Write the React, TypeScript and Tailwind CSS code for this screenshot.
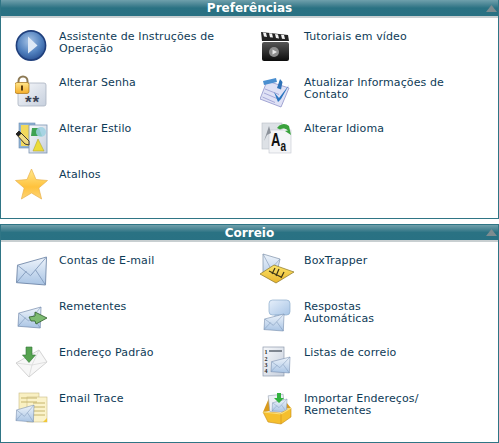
import React from "react";

const Defs = () => (
  <svg width="0" height="0" className="absolute">
    <defs>
      <linearGradient id="env" x1="0" y1="0" x2="0" y2="1"><stop offset="0" stopColor="#eef4fb" /><stop offset="1" stopColor="#a9c4e4" /></linearGradient>
      <linearGradient id="bubble" x1="0" y1="0" x2="1" y2="1"><stop offset="0" stopColor="#e6effa" /><stop offset="1" stopColor="#a8c5e6" /></linearGradient>
      <radialGradient id="play" cx="0.45" cy="0.35" r="0.7"><stop offset="0" stopColor="#a6c3e6" /><stop offset="0.6" stopColor="#4f7fbd" /><stop offset="1" stopColor="#274d8f" /></radialGradient>
      <linearGradient id="gold" x1="0" y1="0" x2="0" y2="1"><stop offset="0" stopColor="#ffe58a" /><stop offset="1" stopColor="#f5ae2a" /></linearGradient>
      <linearGradient id="star" x1="0" y1="0" x2="0" y2="1"><stop offset="0" stopColor="#ffe98f" /><stop offset="0.6" stopColor="#ffc23c" /><stop offset="1" stopColor="#fdd57a" /></linearGradient>
      <linearGradient id="paper" x1="0" y1="0" x2="1" y2="1"><stop offset="0" stopColor="#f8f9fb" /><stop offset="1" stopColor="#c6cfdd" /></linearGradient>
      <linearGradient id="film" x1="0" y1="0" x2="0" y2="1"><stop offset="0" stopColor="#565656" /><stop offset="1" stopColor="#0c0c0c" /></linearGradient>
      <linearGradient id="yel" x1="0" y1="0" x2="0" y2="1"><stop offset="0" stopColor="#fbe46a" /><stop offset="1" stopColor="#e9b52c" /></linearGradient>
    </defs>
  </svg>
);

const Envelope = ({ x = 0, y = 0, w = 30, h = 24 }: { x?: number; y?: number; w?: number; h?: number }) => (
  <g transform={`translate(${x} ${y}) scale(${w / 30} ${h / 24})`}>
    <path d="M1 7 30 0 29 24 0 22Z" fill="url(#env)" stroke="#6d84a6" strokeWidth="0.8" />
    <path d="M1 7 14 16 30 0M0 22 10 12M29 24 19 11" fill="none" stroke="#7f98ba" strokeWidth="0.8" />
  </g>
);

const I = ({ children }: { children: React.ReactNode }) => (
  <svg viewBox="0 0 34 34" className="w-[34px] h-[34px] shrink-0">{children}</svg>
);

const icons: Record<string, React.ReactNode> = {
  play: (
    <I>
      <circle cx="16" cy="16.500" r="14.600" fill="url(#play)" stroke="#1f3f7c" strokeWidth="1.600" />
      <path d="M13 7.500 22.500 16.500 13 24.500Z" fill="#dfe9f6" />
    </I>
  ),
  lock: (
    <svg viewBox="0 0 36 42" className="w-[36px] h-[42px] shrink-0">
      <rect x="3" y="8" width="28" height="23" rx="2" fill="url(#paper)" stroke="#a9b3c0" strokeWidth="0.8" />
      <path d="M3.500 9V6a4.500 4.500 0 0 1 9 0v3" fill="none" stroke="#8d7a55" strokeWidth="2" />
      <rect x="0" y="7.500" width="14" height="11" rx="2" fill="url(#gold)" stroke="#a8721a" strokeWidth="0.7" />
      <rect x="6" y="10.500" width="2" height="5" fill="#5a3d10" />
      <text x="10" y="33" fontSize="17" letterSpacing="1" fontWeight="700" fill="#3b4252" fontFamily="Liberation Sans">**</text>
    </svg>
  ),
  style: (
    <I>
      <rect x="4" y="2" width="16" height="25" fill="#8fb3d6" stroke="#6c8db0" strokeWidth="0.6" />
      <rect x="6" y="4" width="12" height="21" fill="#f2d95c" />
      <rect x="14" y="4" width="18" height="28" fill="url(#paper)" stroke="#7d96b4" strokeWidth="0.8" />
      <path d="M16 15h11l-3-8h-7Z" fill="#3fa352" />
      <circle cx="26" cy="11" r="5" fill="#9ed1e2" opacity="0.85" />
      <path d="M18 30 23 18l6 12Z" fill="#ecdc3a" stroke="#a99f22" strokeWidth="0.5" />
      <path d="M1 13 4 10 14 20 14 24 10 23Z" fill="#f1dc83" stroke="#3d3a33" strokeWidth="1" />
      <path d="M1 13 4 10 6.500 12.500 3.500 15.500Z" fill="#222" />
    </I>
  ),
  star: (
    <I>
      <path d="M16.500 2 21 12.500 32.500 13.500 23.800 21 26.600 32 16.500 26 6.400 32 9.200 21 .5 13.500 12 12.500Z" fill="url(#star)" stroke="#e9b14c" strokeWidth="0.7" strokeLinejoin="round" />
    </I>
  ),
  video: (
    <I>
      <rect x="2" y="13" width="27" height="19" rx="2" fill="url(#film)" />
      <path d="M1 3 28 6 29 12 2 12Z" fill="#222" />
      <path d="M3 3.500 6 4 7 8 4 7.500ZM9 4.200 12 4.600 13 8.600 10 8.200ZM15 5 18 5.400 19 9.400 16 9ZM21 5.700 24 6 25 10 22 9.700Z" fill="#f2f2f2" />
      <circle cx="14" cy="23" r="5" fill="#8e8e8e" />
      <path d="M12.500 20.500 17 23 12.500 25.500Z" fill="#e8e8e8" />
    </I>
  ),
  contact: (
    <I>
      <path d="M7 6 29 13 21 32 0 24Z" fill="#dfe1f5" stroke="#8f93c9" strokeWidth="0.8" />
      <path d="M5 14 19 19.500M4 18 17 23.500M2.500 22 15 27.500" stroke="#a6a9d8" strokeWidth="1" />
      <path d="M3 6 16 3 17 7 4 10Z" fill="#4a8fd0" />
      <path d="M17 13 20 4 22.500 7 21 14.500Z" fill="#2f72b8" />
      <path d="M14 17 19 23 29 10 21 24 18 27Z" fill="#2b76c0" />
    </I>
  ),
  lang: (
    <I>
      <rect x="2" y="2" width="20" height="26" fill="#dde1e6" stroke="#b8bec6" strokeWidth="0.6" />
      <rect x="9" y="9" width="22" height="23" fill="#f4f5f7" stroke="#c2c7cf" strokeWidth="0.6" />
      <path d="M4 20 9 5 11 12 7 14Z" fill="#8c929b" />
      <text transform="translate(11 25) scale(0.72 1)" fontSize="18" fontWeight="700" fill="#111" fontFamily="Liberation Sans">A</text>
      <text transform="translate(20.500 30) scale(0.72 1)" fontSize="14" fontWeight="700" fill="#111" fontFamily="Liberation Sans">a</text>
      <path d="M17 7a8 8 0 0 1 12-2l2 9-6-4 3-.5a6 6 0 0 0-8-1Z" fill="#3aa23d" />
    </I>
  ),
  mail: (
    <I><Envelope x={1.500} y={4} w={30} h={28} /></I>
  ),
  box: (
    <I>
      <path d="M3 1 20 6 15 28 3 22Z" fill="url(#env)" stroke="#7d8fa8" strokeWidth="0.7" />
      <path d="M3 1 11 16 20 6" fill="none" stroke="#8ea2bd" strokeWidth="0.7" />
      <path d="M0 21 14 12 34 19 16 30Z" fill="url(#yel)" stroke="#8a7424" strokeWidth="0.7" />
      <path d="M9 18 21 24M15 15 12 21M19 16 16 23M24 19 21 25" stroke="#3b3416" strokeWidth="1.200" />
    </I>
  ),
  sender: (
    <I>
      <Envelope x={3} y={8} w={23} h={21} />
      <path d="M14 18 20 17 20 13 32 19 21 25 20 22 16 22Z" fill="#7dbb72" stroke="#2d5d2a" strokeWidth="0.8" strokeLinejoin="round" />
    </I>
  ),
  reply: (
    <I>
      <rect x="9" y="1" width="21" height="15" rx="3.500" fill="url(#bubble)" stroke="#8daccc" strokeWidth="0.7" />
      <path d="M19 16 14 22 15 16Z" fill="#c4d7ed" stroke="#8daccc" strokeWidth="0.5" />
      <Envelope x={4} y={15} w={20} h={17} />
    </I>
  ),
  def: (
    <I>
      <path d="M1 18 24 5 32 17 14 32Z" fill="#f7f7f7" stroke="#c2c2c2" strokeWidth="0.7" />
      <path d="M1 18 17 20 24 5M14 32 17 20M32 17 17 20" fill="none" stroke="#d5d5d5" strokeWidth="0.7" />
      <path d="M11 2h6v8h3.500L14 17.500 7.500 10H11Z" fill="#56a350" stroke="#33753a" strokeWidth="0.6" />
    </I>
  ),
  list: (
    <I>
      <rect x="3" y="2" width="21" height="29" fill="url(#paper)" stroke="#8f9aad" strokeWidth="0.7" />
      <path d="M9 6h13" stroke="#5d6470" strokeWidth="1.500" />
      <text x="4.500" y="9" fontSize="6" fontWeight="700" fill="#1d1d1d" fontFamily="Liberation Serif">1</text>
      <text x="4.500" y="16" fontSize="6" fontWeight="700" fill="#1d1d1d" fontFamily="Liberation Serif">2</text>
      <text x="4.500" y="22" fontSize="6" fontWeight="700" fill="#1d1d1d" fontFamily="Liberation Serif">3</text>
      <text x="4.500" y="28" fontSize="6" fontWeight="700" fill="#1d1d1d" fontFamily="Liberation Serif">4</text>
      <Envelope x={11} y={12} w={19} h={16} />
    </I>
  ),
  trace: (
    <I>
      <rect x="4" y="2" width="20" height="24" fill="#f9f0c2" stroke="#c9bd85" strokeWidth="0.6" />
      <rect x="12" y="6" width="20" height="25" fill="#fbf3cb" stroke="#c9bd85" strokeWidth="0.6" />
      <path d="M6 7h16M6 11h16M18 12h12M18 16h12M18 20h12M18 24h12" stroke="#c6b56c" strokeWidth="1" />
      <path d="M28 31 32 27V31Z" fill="#f1c838" />
      <Envelope x={1} y={14} w={18} h={17} />
    </I>
  ),
  import: (
    <I>
      <path d="M9 7 3 21 31 17 26 11Z" fill="#d99a1c" />
      <rect x="9" y="4" width="15" height="16" fill="#eef1f6" stroke="#9aa5b5" strokeWidth="0.6" transform="rotate(-6 16 12)" />
      <Envelope x={12} y={8} w={15} h={13} />
      <path d="M17 2h4v5h3l-5 5-5-5h3Z" fill="#33b23f" />
      <path d="M3 21 21 22 31 17 31 26 21 33 8 31Z" fill="#f5bf2e" stroke="#c58a14" strokeWidth="0.6" strokeLinejoin="round" />
      <path d="M3 21 21 23 31 17" fill="none" stroke="#fbe07a" strokeWidth="1.200" />
      <path d="M21 23V33" stroke="#d99a1c" strokeWidth="0.8" />
    </I>
  ),
};

const Item = ({ icon, text }: { icon: string; text: React.ReactNode }) => (
  <div className="flex h-[46px] items-start">
    <div className="w-[44px] shrink-0 -mt-[1px] -ml-[1px]">{icons[icon]}</div>
    <div className="text-[11px] leading-[12px] tracking-[0.12px] text-[#0e3b57] pt-[1px]">{text}</div>
  </div>
);

const Panel = ({ title, items, first }: { title: string; items: [string, React.ReactNode][]; first?: boolean }) => (
  <section className={first ? "h-[219px] border border-t-0 border-[#2f7585] bg-white flex flex-col" : "h-[219px] border border-[#2f7585] bg-white flex flex-col"}>
    <header className={first
      ? "relative h-[18px] shrink-0 border-b-2 border-[#c8cfd1] bg-gradient-to-b from-[#6fa0ac] via-[#2a7283] via-50% to-[#297183] text-center text-white font-bold text-[12px] leading-[17px]"
      : "relative h-[17px] shrink-0 border-b-2 border-[#c8cfd1] bg-gradient-to-b from-[#6fa0ac] via-[#2a7283] via-50% to-[#297183] text-center text-white font-bold text-[12px] leading-[16px]"}>
      {title}
      <svg viewBox="0 0 11 7" className={first ? "absolute right-[1px] top-[5px] w-[11px] h-[7px]" : "absolute right-[1px] top-[4px] w-[11px] h-[7px]"}>
        <path d="M5.500 0 11 7H0Z" fill="#7d8c90" />
      </svg>
    </header>
    <div className="grid grid-cols-[245px_1fr] pl-[15px] pt-[12px]">
      {items.map(([icon, text], i) => (
        <Item key={i} icon={icon} text={text} />
      ))}
    </div>
  </section>
);

export default function App() {
  return (
    <div className="w-[499px] h-[443px] bg-white flex flex-col gap-[5px] overflow-hidden" style={{ fontFamily: '"DejaVu Sans", sans-serif' }}>
      <Defs />
      <Panel
        title="Preferências"
        first
        items={[
          ["play", <>Assistente de Instruções de<br />Operação</>],
          ["video", "Tutoriais em vídeo"],
          ["lock", "Alterar Senha"],
          ["contact", <>Atualizar Informações de<br />Contato</>],
          ["style", "Alterar Estilo"],
          ["lang", "Alterar Idioma"],
          ["star", "Atalhos"],
        ]}
      />
      <Panel
        title="Correio"
        items={[
          ["mail", "Contas de E-mail"],
          ["box", "BoxTrapper"],
          ["sender", "Remetentes"],
          ["reply", <>Respostas<br />Automáticas</>],
          ["def", "Endereço Padrão"],
          ["list", "Listas de correio"],
          ["trace", "Email Trace"],
          ["import", <>Importar Endereços/<br />Remetentes</>],
        ]}
      />
    </div>
  );
}
